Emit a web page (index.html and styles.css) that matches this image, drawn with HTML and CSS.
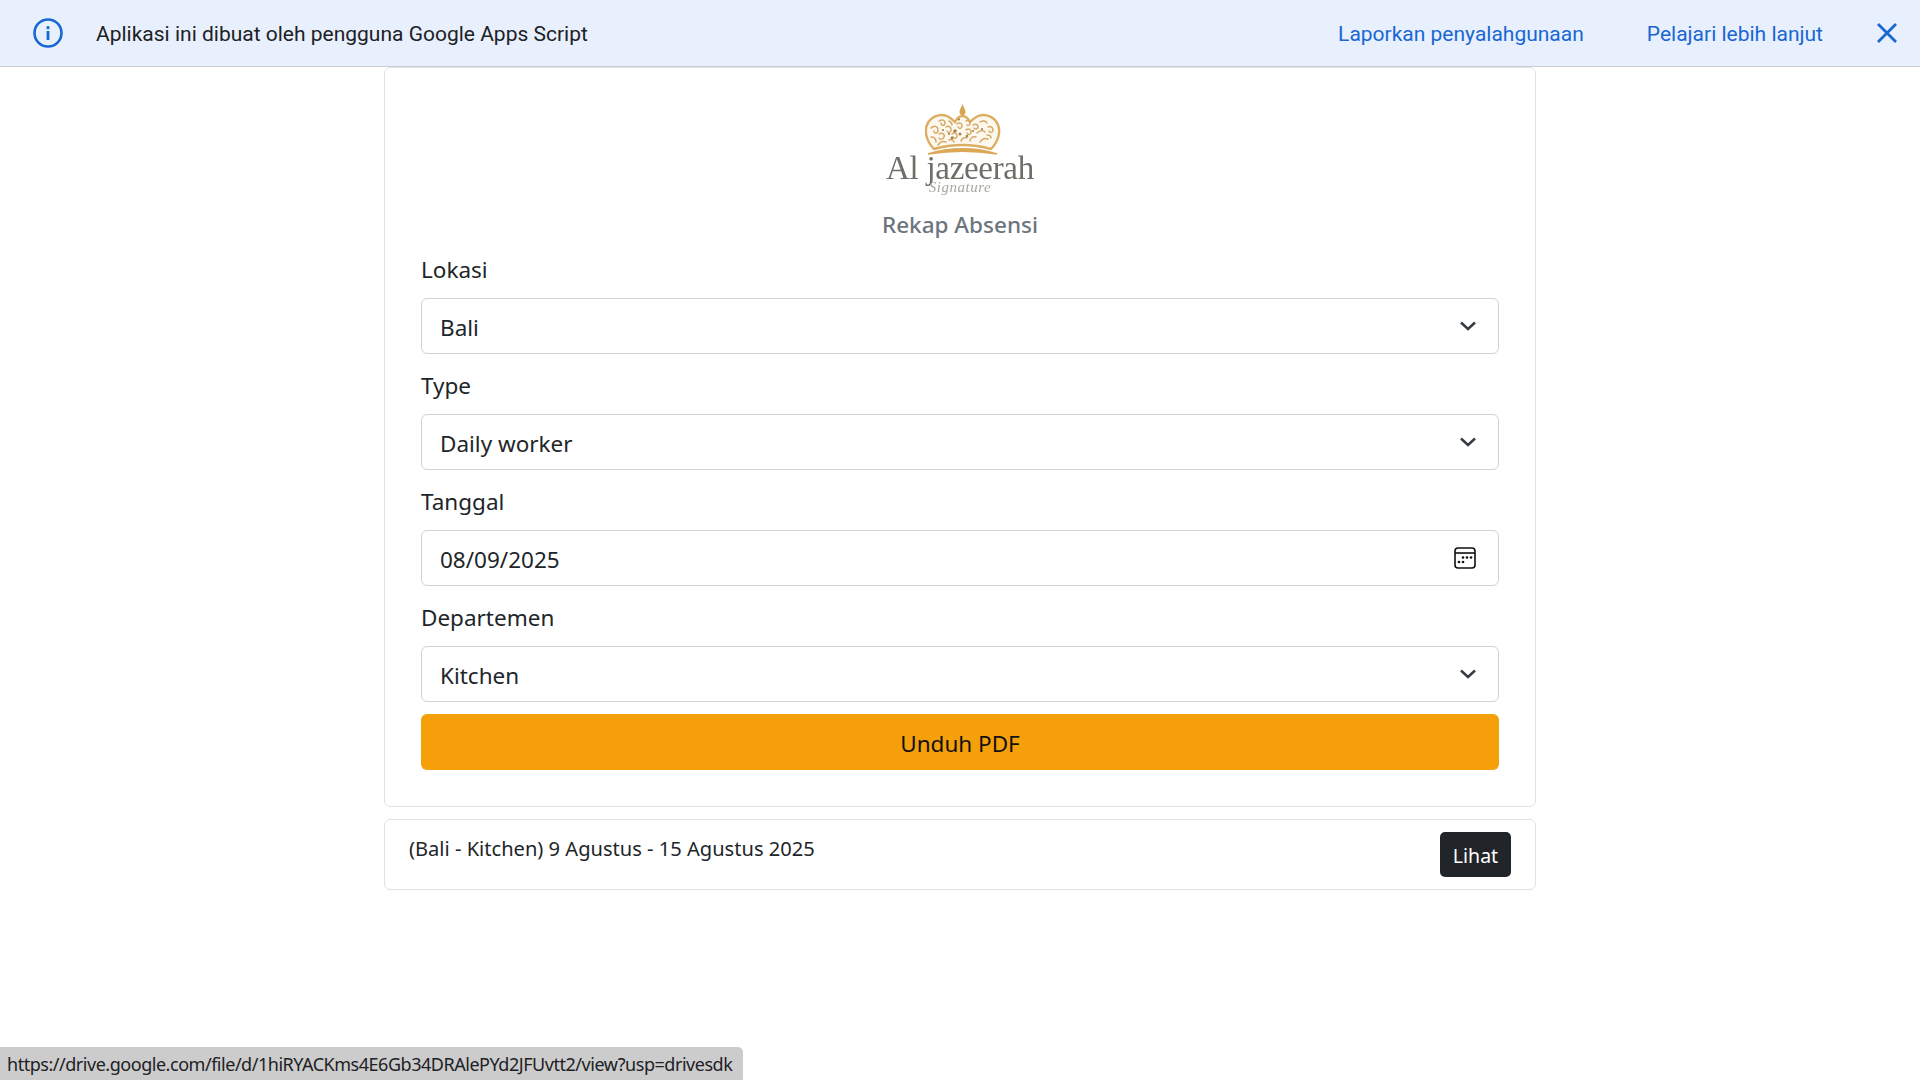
FILE: index.html
```html
<!DOCTYPE html>
<html lang="id">
<head>
<meta charset="utf-8">
<title>Rekap Absensi</title>
<link rel="stylesheet" href="styles.css">
</head>
<body>
<header class="banner">
  <svg class="banner-info" width="32" height="32" viewBox="0 0 32 32"><circle cx="16" cy="16" r="13.500" fill="none" stroke="#1967d2" stroke-width="2.600"/><rect x="14.600" y="14" width="2.800" height="9" fill="#1967d2"/><rect x="14.600" y="9.200" width="2.800" height="2.900" fill="#1967d2"/></svg>
  <span class="banner-text">Aplikasi ini dibuat oleh pengguna Google Apps Script</span>
  <a class="banner-link first">Laporkan penyalahgunaan</a>
  <a class="banner-link second">Pelajari lebih lanjut</a>
  <svg class="banner-close" width="22" height="22" viewBox="0 0 22 22"><path d="M2 2 20 20M20 2 2 20" stroke="#1967d2" stroke-width="2.800" fill="none"/></svg>
</header>
<main class="container">
  <section class="card form-card">
    <div class="logo">
      <svg class="crown" width="76" height="52" viewBox="0 0 76 52">
        <path d="M37.500 0c1.300 3.500 3 5.500 3 8 0 2-1.300 3.200-3 3.200s-3-1.200-3-3.200c0-2.500 1.700-4.500 3-8z" fill="#d9a552"/>
        <path d="M9 45C2 38-1 28 2 21 5 13 14 9 22 12c4 2 6 4 8 6 2-4 4-6 7.500-6s5.500 2 7.500 6c2-2 4-4 8-6 8-3 17 1 20 9 3 7 0 17-7 24-18-5-39-5-57 0z" fill="#fdf8ee" stroke="#dcae62" stroke-width="2.400"/>
        <g fill="none" stroke="#d6aa66" stroke-width="1.500" stroke-linecap="round">
          <path d="M6 24c3-3 7-2 7 2s-4 4-4 1"/><path d="M6 33c3 0 5 2 5 5"/><path d="M14 17c3-2 6-1 6 2s-4 3-4 0"/><path d="M14 30c3-2 6 0 5 3s-4 3-5 1"/>
          <path d="M21 23c3-2 5 0 5 3s-3 3-4 1"/><path d="M13 41c2-3 5-4 8-3"/><path d="M24 17c2 1 3 2 3 4"/><path d="M27 30c2-2 5-1 5 2s-3 3-4 1"/>
          <path d="M32 20c2-2 5-1 5 2s-3 3-4 1"/><path d="M41 17c2-1 4 0 4 2s-2 3-3 2"/><path d="M41 26c2-2 5-1 5 2s-3 3-4 1"/><path d="M48 21c3-2 5 0 5 2s-3 3-4 1"/>
          <path d="M36 37c1-3 4-4 6-3"/><path d="M45 37c0-3 3-5 6-4"/><path d="M55 18c3-2 6-1 7 1"/><path d="M52 29c3-3 6-3 8-1"/><path d="M63 23c2-1 5 0 5 3s-3 3-4 1"/>
          <path d="M55 38c2-3 5-4 8-3"/><path d="M62 31c2 0 4 1 4 3"/><path d="M24 36c2-1 4 0 5 2"/>
        </g>
        <g fill="#a98146"><circle cx="30" cy="27" r="1.800"/><circle cx="35" cy="30" r="1.500"/><circle cx="27" cy="34" r="1.400"/><circle cx="34" cy="15.500" r="1.100"/><circle cx="42" cy="32" r="1.300"/><circle cx="18" cy="26" r="1.100"/><circle cx="48" cy="27" r="1.100"/><circle cx="57" cy="25" r="1.100"/><circle cx="24" cy="30" r="1.100"/></g>
        <path d="M3 50C24 43 51 43 72 50 51 46.500 24 46.500 3 50z" fill="#dba956" stroke="#dba956" stroke-width="1.600"/>
      </svg>
      <div class="logo-name">Al jazeerah</div>
      <div class="logo-sub">Signature</div>
    </div>
    <h1 class="title">Rekap Absensi</h1>
    <label class="field-label">Lokasi</label>
    <div class="control"><span>Bali</span><svg class="chev" width="16" height="12" viewBox="0 0 16 12"><path d="M1 2.500 8 9l7-6.500" fill="none" stroke="#343a40" stroke-width="2.400"/></svg></div>
    <label class="field-label">Type</label>
    <div class="control"><span>Daily worker</span><svg class="chev" width="16" height="12" viewBox="0 0 16 12"><path d="M1 2.500 8 9l7-6.500" fill="none" stroke="#343a40" stroke-width="2.400"/></svg></div>
    <label class="field-label">Tanggal</label>
    <div class="control"><span>08/09/2025</span><svg class="cal" width="22" height="22" viewBox="0 0 22 22"><rect x="1" y="1" width="20" height="20" rx="3" fill="none" stroke="#111" stroke-width="1.600"/><path d="M1 6h20" stroke="#111" stroke-width="1.600"/><g fill="#111"><circle cx="9" cy="10.500" r="1.300"/><circle cx="13" cy="10.500" r="1.300"/><circle cx="17" cy="10.500" r="1.300"/><circle cx="5" cy="15" r="1.300"/><circle cx="9" cy="15" r="1.300"/></g></svg></div>
    <label class="field-label">Departemen</label>
    <div class="control last"><span>Kitchen</span><svg class="chev" width="16" height="12" viewBox="0 0 16 12"><path d="M1 2.500 8 9l7-6.500" fill="none" stroke="#343a40" stroke-width="2.400"/></svg></div>
    <button class="submit">Unduh PDF</button>
  </section>
  <section class="card result-card">
    <span class="result-text">(Bali - Kitchen) 9 Agustus - 15 Agustus 2025</span>
    <button class="view">Lihat</button>
  </section>
</main>
<div class="status">https://drive.google.com/file/d/1hiRYACKms4E6Gb34DRAlePYd2JFUvtt2/view?usp=drivesdk</div>
</body>
</html>
```
FILE: styles.css
```css
* { box-sizing: border-box; }
html, body { margin: 0; height: 100%; }
body { background: #fff; color: #212529; font-family: "Noto Sans", "Open Sans", sans-serif; overflow: hidden; }
.banner { height: 67px; background: #e8f0fe; border-bottom: 1px solid #ccc; display: flex; align-items: center; font-family: Roboto, sans-serif; font-size: 21px; padding: 1px 22px 0 32px; }
.banner-info { flex: none; margin-top: -2px; }
.banner-text { margin-left: 32px; color: #202124; flex: 1; }
.banner-link { color: #1967d2; }
.banner-link.first { margin-right: 63px; }
.banner-link.second { margin-right: 53px; }
.banner-close { margin-top: -2px; }
.container { width: 1152px; margin: 0 auto; }
.card { border: 1px solid #dee2e6; border-radius: 6px; background: #fff; }
.form-card { padding: 36px 36px 36px; }
.logo { height: 96px; display: flex; flex-direction: column; align-items: center; filter: blur(0.4px); }
.crown { display: block; flex: none; margin-left: 5px; }
.logo-name { font-family: "Liberation Serif", serif; font-size: 33px; line-height: 30px; color: #6f6e67; margin-top: -3px; letter-spacing: -0.300px; white-space: nowrap; }
.logo-sub { font-family: "Liberation Serif", serif; font-style: italic; font-size: 15px; line-height: 14px; letter-spacing: 0.500px; color: #a8a7a2; margin-top: -3px; }
.title { font-size: 22.500px; font-weight: 500; line-height: 36px; color: #6c757d; text-align: center; margin: 7px 0 9px; }
.field-label { display: block; font-size: 22.500px; line-height: 36px; margin-bottom: 10px; }
.control { height: 56px; border: 1px solid #ced4da; border-radius: 6px; display: flex; align-items: center; justify-content: space-between; padding: 2px 22px 0 18px; font-size: 22.500px; margin-bottom: 14px; }
.control .chev { margin-top: -2px; }
.control .cal { margin: -2px 0 0 0; }
.control.last { margin-bottom: 12px; }
.submit { display: block; width: 100%; height: 56px; border: 0; border-radius: 6px; background: #f59f0a; color: #111; font: inherit; font-size: 22.500px; padding: 2px 0 0; }
.result-card { margin-top: 12px; height: 71px; padding: 12px 24px; display: flex; justify-content: space-between; align-items: flex-start; }
.result-text { font-size: 20.100px; line-height: 32px; margin-top: 1px; }
.view { width: 71px; height: 45px; border: 0; border-radius: 5px; background: #212529; color: #fff; font: inherit; font-size: 19.500px; padding: 1px 0 0; }
.status { position: fixed; left: 0; bottom: 0; height: 33px; width: 743px; background: #ccc; border-top-right-radius: 5px; font-size: 18px; letter-spacing: -0.470px; line-height: 35px; padding-left: 7px; color: #202124; white-space: nowrap; overflow: hidden; }
```
